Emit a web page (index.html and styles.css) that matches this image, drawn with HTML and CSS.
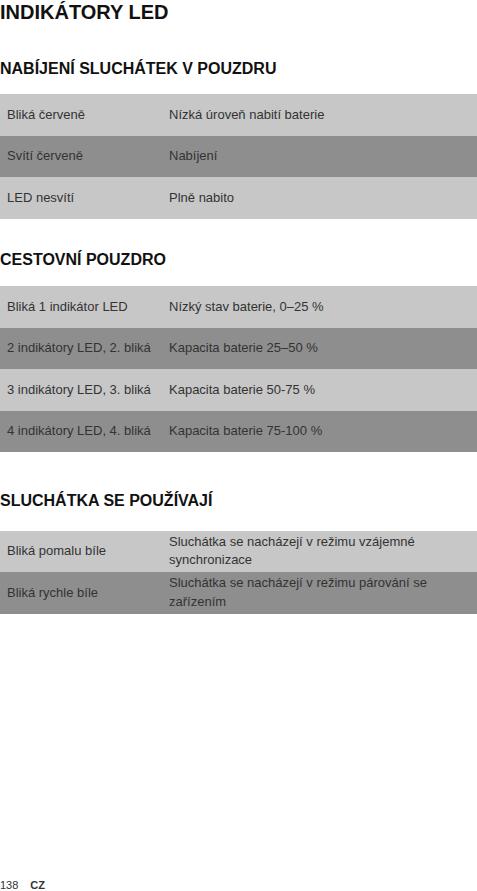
FILE: index.html
```html
<!DOCTYPE html>
<html lang="cs">
<head>
<meta charset="utf-8">
<title>Indikátory LED</title>
<link rel="stylesheet" href="styles.css">
</head>
<body>
<main class="page">
  <h1 class="title">INDIKÁTORY LED</h1>

  <h2 class="section section-first">NABÍJENÍ SLUCHÁTEK V POUZDRU</h2>
  <div class="table table-first">
    <div class="row light"><div class="cell c1">Bliká červeně</div><div class="cell c2">Nízká úroveň nabití baterie</div></div>
    <div class="row dark"><div class="cell c1">Svítí červeně</div><div class="cell c2">Nabíjení</div></div>
    <div class="row light"><div class="cell c1">LED nesvítí</div><div class="cell c2">Plně nabito</div></div>
  </div>

  <h2 class="section section-second">CESTOVNÍ POUZDRO</h2>
  <div class="table table-second">
    <div class="row light"><div class="cell c1">Bliká 1 indikátor LED</div><div class="cell c2">Nízký stav baterie, 0–25 %</div></div>
    <div class="row dark"><div class="cell c1">2 indikátory LED, 2. bliká</div><div class="cell c2">Kapacita baterie 25–50 %</div></div>
    <div class="row light"><div class="cell c1">3 indikátory LED, 3. bliká</div><div class="cell c2">Kapacita baterie 50-75 %</div></div>
    <div class="row dark"><div class="cell c1">4 indikátory LED, 4. bliká</div><div class="cell c2">Kapacita baterie 75-100 %</div></div>
  </div>

  <h2 class="section section-third">SLUCHÁTKA SE POUŽÍVAJÍ</h2>
  <div class="table table-third">
    <div class="row light"><div class="cell c1">Bliká pomalu bíle</div><div class="cell c2 wrap">Sluchátka se nacházejí v režimu vzájemné synchronizace</div></div>
    <div class="row dark"><div class="cell c1">Bliká rychle bíle</div><div class="cell c2 wrap">Sluchátka se nacházejí v režimu párování se zařízením</div></div>
  </div>

  <footer class="footer"><span class="pagenum">138</span><span class="lang">CZ</span></footer>
</main>
</body>
</html>
```
FILE: styles.css
```css
html, body {
  margin: 0;
  padding: 0;
  background: #ffffff;
}
body {
  font-family: "Liberation Sans", Arial, sans-serif;
  color: #333333;
}
.page {
  min-height: 891px;
  display: flex;
  flex-direction: column;
  box-sizing: border-box;
}
.title {
  margin: 0;
  font-size: 20px;
  line-height: 24px;
  font-weight: bold;
  color: #111111;
}
.section {
  margin: 0;
  font-size: 16px;
  line-height: 20px;
  font-weight: bold;
  color: #111111;
}
.section-first { margin-top: 35px; }
.section-second { margin-top: 31px; }
.section-third { margin-top: 38.7px; }
.table {
  display: flex;
  flex-direction: column;
}
.table-first { margin-top: 15px; }
.table-second { margin-top: 16.5px; }
.table-third { margin-top: 20px; }
.row {
  display: grid;
  grid-template-columns: 162px 1fr;
  height: 41.5px;
  align-items: center;
  font-size: 13px;
  line-height: 18.5px;
}
.light { background: #c7c7c7; }
.dark { background: #8f8e8e; }
.cell { color: #333333; }
.c1 { padding-left: 7px; }
.c2 { padding-left: 7px; padding-right: 6px; }
.footer {
  margin-top: auto;
  font-size: 11px;
  line-height: 12px;
  color: #333333;
  display: flex;
  gap: 12px;
}
.lang { font-weight: bold; }
```
